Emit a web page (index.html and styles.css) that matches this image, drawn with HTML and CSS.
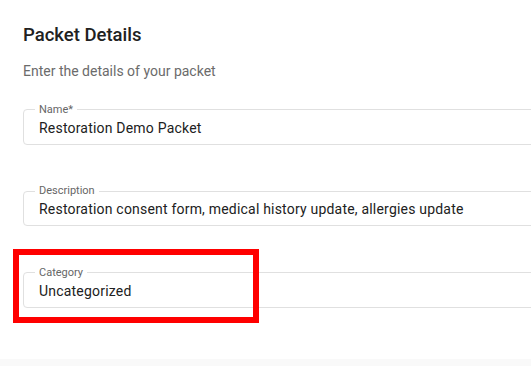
FILE: index.html
```html
<!DOCTYPE html>
<html lang="en">
<head>
<meta charset="utf-8">
<title>Packet Details</title>
<link rel="stylesheet" href="styles.css">
</head>
<body>
<main class="panel">
  <h1 class="title">Packet Details</h1>
  <p class="subtitle">Enter the details of your packet</p>
  <div class="fields">
    <fieldset class="field">
      <legend>Name*</legend>
      <div class="value">Restoration Demo Packet</div>
    </fieldset>
    <fieldset class="field">
      <legend>Description</legend>
      <div class="value">Restoration consent form, medical history update, allergies update</div>
    </fieldset>
    <div class="highlight-wrap">
      <fieldset class="field">
        <legend>Category</legend>
        <div class="value">Uncategorized</div>
      </fieldset>
      <div class="highlight"></div>
    </div>
  </div>
</main>
<div class="band"></div>
</body>
</html>
```
FILE: styles.css
```css
html, body {
  margin: 0;
  padding: 0;
  height: 100%;
  overflow: hidden;
  background: #ffffff;
  font-family: Roboto, "Liberation Sans", Arial, sans-serif;
}
body {
  display: flex;
  flex-direction: column;
}
.panel {
  height: 359px;
  flex: none;
  box-sizing: border-box;
  padding: 22.6px 0 0 23px;
  background: #ffffff;
  overflow: hidden;
}
.band {
  flex: 1;
  background: #f9f9f9;
}
.title {
  margin: 0;
  font-size: 18.5px;
  font-weight: 500;
  line-height: 24px;
  color: #212121;
}
.subtitle {
  margin: 14.6px 0 0;
  font-size: 14px;
  line-height: 20px;
  color: #6b6b6b;
}
.fields {
  margin-top: 22.5px;
  display: flex;
  flex-direction: column;
  gap: 40.5px;
}
.field {
  margin: 0;
  width: 600px;
  min-width: 0;
  box-sizing: border-box;
  border: 1px solid #e0e0e0;
  border-radius: 4px;
  padding: 2px 15px 6px;
}
.field legend {
  font-size: 11px;
  line-height: 12px;
  padding: 0 4px;
  margin-left: -4px;
  color: #666666;
}
.value {
  font-size: 14px;
  letter-spacing: 0.2px;
  line-height: 20px;
  color: #212121;
  white-space: nowrap;
}
.highlight-wrap {
  position: relative;
}
.highlight {
  position: absolute;
  left: -10px;
  top: -18px;
  width: 246px;
  height: 74px;
  box-sizing: border-box;
  border: 6px solid #ff0000;
}
```
